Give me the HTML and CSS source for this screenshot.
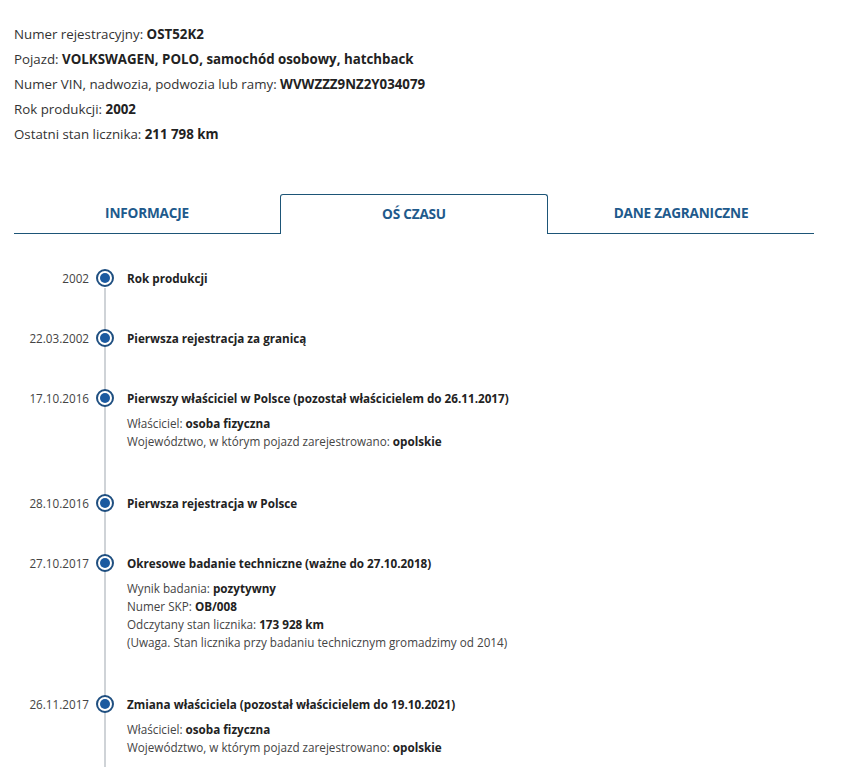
FILE: index.html
```html
<!DOCTYPE html>
<html lang="pl">
<head>
<meta charset="utf-8">
<title>Historia pojazdu</title>
<link rel="stylesheet" href="styles.css">
</head>
<body>
<div class="page">
  <div class="summary">
    <p>Numer rejestracyjny: <b>OST52K2</b></p>
    <p>Pojazd: <b>VOLKSWAGEN, POLO, samochód osobowy, hatchback</b></p>
    <p>Numer VIN, nadwozia, podwozia lub ramy: <b>WVWZZZ9NZ2Y034079</b></p>
    <p>Rok produkcji: <b>2002</b></p>
    <p>Ostatni stan licznika: <b>211 798 km</b></p>
  </div>

  <div class="tabs">
    <div class="tab">INFORMACJE</div>
    <div class="tab active">OŚ CZASU</div>
    <div class="tab">DANE ZAGRANICZNE</div>
  </div>

  <div class="timeline">
    <div class="item">
      <div class="date">2002</div>
      <div class="dot"></div>
      <div class="content"><div class="title">Rok produkcji</div></div>
    </div>
    <div class="item">
      <div class="date">22.03.2002</div>
      <div class="dot"></div>
      <div class="content"><div class="title">Pierwsza rejestracja za granicą</div></div>
    </div>
    <div class="item">
      <div class="date">17.10.2016</div>
      <div class="dot"></div>
      <div class="content">
        <div class="title">Pierwszy właściciel w Polsce (pozostał właścicielem do 26.11.2017)</div>
        <div class="details">
          <div>Właściciel: <b>osoba fizyczna</b></div>
          <div>Województwo, w którym pojazd zarejestrowano: <b>opolskie</b></div>
        </div>
      </div>
    </div>
    <div class="item">
      <div class="date">28.10.2016</div>
      <div class="dot"></div>
      <div class="content"><div class="title">Pierwsza rejestracja w Polsce</div></div>
    </div>
    <div class="item">
      <div class="date">27.10.2017</div>
      <div class="dot"></div>
      <div class="content">
        <div class="title">Okresowe badanie techniczne (ważne do 27.10.2018)</div>
        <div class="details">
          <div>Wynik badania: <b>pozytywny</b></div>
          <div>Numer SKP: <b>OB/008</b></div>
          <div>Odczytany stan licznika: <b>173 928 km</b></div>
          <div>(Uwaga. Stan licznika przy badaniu technicznym gromadzimy od 2014)</div>
        </div>
      </div>
    </div>
    <div class="item">
      <div class="date">26.11.2017</div>
      <div class="dot"></div>
      <div class="content">
        <div class="title">Zmiana właściciela (pozostał właścicielem do 19.10.2021)</div>
        <div class="details">
          <div>Właściciel: <b>osoba fizyczna</b></div>
          <div>Województwo, w którym pojazd zarejestrowano: <b>opolskie</b></div>
        </div>
      </div>
    </div>
  </div>
</div>
</body>
</html>
```

FILE: styles.css
```css
html, body {
  margin: 0;
  padding: 0;
  background: #ffffff;
}
body {
  font-family: "Open Sans", "Noto Sans", sans-serif;
  color: #333333;
  font-size: 13.3px;
}
b {
  font-weight: 700;
  color: #222222;
}
.page {
  width: 800px;
  padding: 0 0 0 14px;
}
.summary {
  padding-top: 22px;
}
.summary p {
  margin: 0;
  line-height: 25px;
  height: 25px;
}
.tabs {
  display: flex;
  margin-top: 47px;
  height: 40px;
}
.tab {
  flex: 1;
  display: flex;
  align-items: center;
  justify-content: center;
  border-bottom: 1px solid #1d5577;
  color: #1e5a8c;
  font-weight: 700;
  font-size: 13.6px;
  letter-spacing: -0.2px;
  padding-bottom: 3px;
}
.tab.active {
  border: 1px solid #1d5577;
  border-bottom: none;
  border-radius: 3px 3px 0 0;
  padding-bottom: 2px;
}
.timeline {
  position: relative;
  padding-top: 34px;
}
.timeline::before {
  content: "";
  position: absolute;
  left: 90px;
  top: 54px;
  bottom: -40px;
  width: 2px;
  background: #cfd3d7;
}
.item {
  display: flex;
  align-items: flex-start;
  margin-bottom: 40px;
}
.date {
  width: 75px;
  text-align: right;
  line-height: 20px;
  font-size: 11.7px;
  color: #444444;
}
.dot {
  box-sizing: border-box;
  width: 18px;
  height: 18px;
  margin: 1px 0 0 7px;
  border-radius: 50%;
  border: 2px solid #1f4f80;
  background: #ffffff;
  position: relative;
  flex-shrink: 0;
}
.dot::after {
  content: "";
  position: absolute;
  left: 2px;
  top: 2px;
  width: 10px;
  height: 10px;
  border-radius: 50%;
  background: #1b5aa0;
}
.content {
  margin-left: 13px;
  font-size: 11.7px;
}
.title {
  line-height: 20px;
  font-weight: 700;
  color: #222222;
}
.details {
  margin-top: 6px;
  margin-bottom: 3px;
  line-height: 18px;
  color: #444444;
}
```
